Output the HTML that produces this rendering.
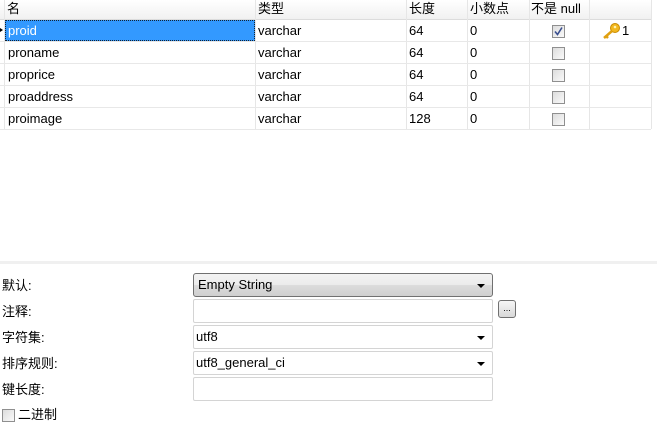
<!DOCTYPE html>
<html><head><meta charset="utf-8"><style>
*{margin:0;padding:0;box-sizing:border-box}
body{width:657px;height:427px;background:#fff;font-family:"Liberation Sans","Noto Sans CJK SC",sans-serif;font-size:13px;color:#000;position:relative;overflow:hidden}
.a{position:absolute}
.hd{left:0;top:0;width:651px;height:20px;background:linear-gradient(#fff,#f1f1f1);border-bottom:1px solid #dcdcdc}
.vl{position:absolute;width:1px;background:#e6e6e6;top:0;height:129px}
.hl{position:absolute;left:0;width:651px;height:1px;background:#e8e8e8}
.t{position:absolute;line-height:16px;white-space:nowrap}
.cb{position:absolute;width:13px;height:13px;border:1px solid #8f8f8f;background:linear-gradient(135deg,#dcdcdc,#fafafa)}
.f{position:absolute;left:193px;width:300px;height:24px;border:1px solid #d4d4d4;border-radius:2px;background:#fff}
.ar{position:absolute;right:7px;top:10px;width:0;height:0;border-left:4px solid transparent;border-right:4px solid transparent;border-top:4px solid #000}
</style></head><body>
<div class="a hd"></div>
<div class="vl" style="left:4px"></div>
<div class="vl" style="left:255px"></div>
<div class="vl" style="left:406px"></div>
<div class="vl" style="left:467px"></div>
<div class="vl" style="left:529px"></div>
<div class="vl" style="left:589px"></div>
<div class="vl" style="left:651px"></div>
<div class="hl" style="top:41px"></div>
<div class="hl" style="top:63px"></div>
<div class="hl" style="top:85px"></div>
<div class="hl" style="top:107px"></div>
<div class="hl" style="top:129px"></div>
<div class="t" style="left:7px;top:1px">名</div>
<div class="t" style="left:258px;top:1px">类型</div>
<div class="t" style="left:409px;top:1px">长度</div>
<div class="t" style="left:470px;top:1px">小数点</div>
<div class="t" style="left:531px;top:1px">不是 null</div>
<div class="a" style="left:5px;top:20px;width:250px;height:21px;background:#3399ff;border:1px dotted #123"></div>
<div class="a" style="left:0;top:28px;width:0;height:0;border-top:2px solid transparent;border-bottom:2px solid transparent;border-left:3px solid #000"></div>
<div class="t" style="left:8px;top:23px;color:#fff">proid</div>
<div class="t" style="left:8px;top:45px">proname</div>
<div class="t" style="left:8px;top:67px">proprice</div>
<div class="t" style="left:8px;top:89px">proaddress</div>
<div class="t" style="left:8px;top:111px">proimage</div>
<div class="t" style="left:258px;top:23px">varchar</div>
<div class="t" style="left:258px;top:45px">varchar</div>
<div class="t" style="left:258px;top:67px">varchar</div>
<div class="t" style="left:258px;top:89px">varchar</div>
<div class="t" style="left:258px;top:111px">varchar</div>
<div class="t" style="left:409px;top:23px">64</div>
<div class="t" style="left:409px;top:45px">64</div>
<div class="t" style="left:409px;top:67px">64</div>
<div class="t" style="left:409px;top:89px">64</div>
<div class="t" style="left:409px;top:111px">128</div>
<div class="t" style="left:470px;top:23px">0</div>
<div class="t" style="left:470px;top:45px">0</div>
<div class="t" style="left:470px;top:67px">0</div>
<div class="t" style="left:470px;top:89px">0</div>
<div class="t" style="left:470px;top:111px">0</div>
<div class="cb" style="left:552px;top:25px"><svg width="11" height="11" style="position:absolute;left:0;top:0"><path d="M2 5.5 L4.5 8.5 L9 1.5" stroke="#3a4f8f" stroke-width="1.6" fill="none"/></svg></div>
<div class="cb" style="left:552px;top:47px"></div>
<div class="cb" style="left:552px;top:69px"></div>
<div class="cb" style="left:552px;top:91px"></div>
<div class="cb" style="left:552px;top:113px"></div>
<svg class="a" style="left:602px;top:22px" width="20" height="18"><circle cx="13" cy="6" r="4.5" fill="#f2b820" stroke="#c88a00"/><circle cx="13" cy="5" r="1.3" fill="#fff3b0"/><path d="M10 9 L2 16 M4 14 L6 16" stroke="#e0a010" stroke-width="2.5" fill="none"/></svg>
<div class="t" style="left:622px;top:23px">1</div>
<div class="a" style="left:0;top:261px;width:657px;height:3px;background:#f0f0f0"></div>
<div class="t" style="left:2px;top:278px">默认:</div>
<div class="t" style="left:2px;top:304px">注释:</div>
<div class="t" style="left:2px;top:330px">字符集:</div>
<div class="t" style="left:2px;top:356px">排序规则:</div>
<div class="t" style="left:2px;top:382px">键长度:</div>
<div class="f" style="top:273px;border:1px solid #707070;border-radius:3px;background:linear-gradient(#f3f3f3 0,#ebebeb 50%,#dcdcdc 51%,#cfcfcf)"><div class="t" style="left:4px;top:3px">Empty String</div><div class="ar"></div></div>
<div class="f" style="top:299px"></div>
<div class="a" style="left:498px;top:300px;width:18px;height:18px;border:1px solid #707070;border-radius:3px;background:linear-gradient(#f6f6f6,#d8d8d8);font-size:9px;text-align:center;line-height:14px">...</div>
<div class="f" style="top:325px"><div class="t" style="left:2px;top:3px">utf8</div><div class="ar"></div></div>
<div class="f" style="top:351px"><div class="t" style="left:2px;top:3px">utf8_general_ci</div><div class="ar"></div></div>
<div class="f" style="top:377px"></div>
<div class="cb" style="left:2px;top:409px"></div>
<div class="t" style="left:18px;top:407px">二进制</div>
</body></html>
